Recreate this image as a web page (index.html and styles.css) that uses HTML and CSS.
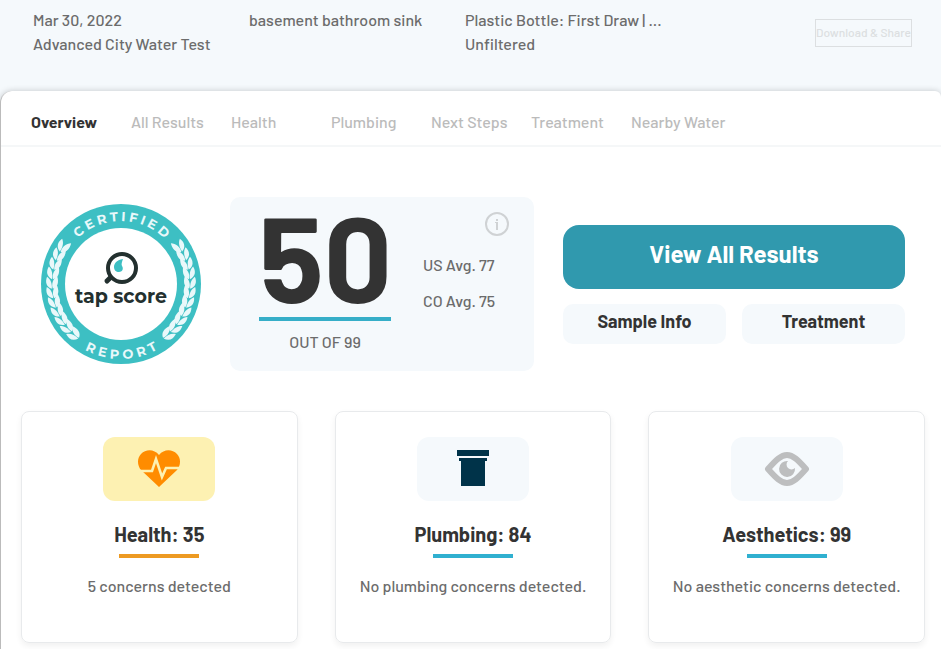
FILE: index.html
```html
<!DOCTYPE html>
<html lang="en">
<head>
  <meta charset="UTF-8">
  <meta name="viewport" content="width=device-width, initial-scale=1">
  <title>Tap Score Report</title>
  <link rel="stylesheet" href="styles.css">
</head>
<body>
  <header class="report-header">
    <div class="info">
      <div>Mar 30, 2022</div>
      <div>Advanced City Water Test</div>
    </div>
    <div class="info">
      <div>basement bathroom sink</div>
    </div>
    <div class="info">
      <div>Plastic Bottle: First Draw | ...</div>
      <div>Unfiltered</div>
    </div>
    <button type="button" class="download">Download &amp; Share</button>
  </header>

  <main class="panel">
    <nav class="tabs">
      <a href="#overview" class="active">Overview</a>
      <a href="#results">All Results</a>
      <a href="#health">Health</a>
      <a href="#plumbing">Plumbing</a>
      <a href="#next">Next Steps</a>
      <a href="#treatment">Treatment</a>
      <a href="#nearby">Nearby Water</a>
    </nav>

    <section class="summary">
      <svg class="seal" viewBox="0 0 160 160" role="img" aria-label="Tap Score certified report">
        <defs>
          <path id="arcTop" d="M17 80 A63 63 0 0 1 143 80"/>
          <path id="arcBottom" d="M5 80 A75 75 0 0 0 155 80"/>
          <g id="leaf">
            <path d="M11 86 C5 84 4 79 6 74 C10 77 11 81 11 86 Z"/>
            <path d="M12 86 C10 81 12 76 16 73 C18 79 17 84 12 86 Z"/>
          </g>
          <g id="branch">
            <use href="#leaf" transform="rotate(33 80 80)"/>
            <use href="#leaf" transform="rotate(25 80 80)"/>
            <use href="#leaf" transform="rotate(17 80 80)"/>
            <use href="#leaf" transform="rotate(9 80 80)"/>
            <use href="#leaf" transform="rotate(1 80 80)"/>
            <use href="#leaf" transform="rotate(-7 80 80)"/>
            <use href="#leaf" transform="rotate(-15 80 80)"/>
            <use href="#leaf" transform="rotate(-23 80 80)"/>
            <use href="#leaf" transform="rotate(-31 80 80)"/>
            <use href="#leaf" transform="rotate(-39 80 80)"/>
            <use href="#leaf" transform="rotate(-47 80 80)"/>
          </g>
        </defs>
        <circle cx="80" cy="80" r="80" fill="#3dbfc3"/>
        <circle cx="80" cy="80" r="56" fill="#fff"/>
        <g fill="#e9f8fa">
          <use href="#branch"/>
          <use href="#branch" transform="translate(160 0) scale(-1 1)"/>
        </g>
        <text class="ring-text"><textPath href="#arcTop" startOffset="51%">CERTIFIED</textPath></text>
        <text class="ring-text ring-bottom"><textPath href="#arcBottom" startOffset="51%">REPORT</textPath></text>
        <path d="M71 72 L66 77" stroke="#23302f" stroke-width="5" stroke-linecap="round"/>
        <circle cx="81" cy="64" r="14" fill="#fff" stroke="#23302f" stroke-width="4"/>
        <path d="M82 55 C75 56 73 60 73 63 C73 66 75 68 78 68 C81 68 83 65 81 62 C80 60 81 58 82 55 Z" fill="#3dbfc3"/>
        <text class="brand" x="80" y="99">tap score</text>
      </svg>

      <div class="score-box">
        <div class="score">
          <div class="score-value">50</div>
          <div class="score-max">OUT OF 99</div>
        </div>
        <div class="averages">
          <button type="button" class="info-btn" aria-label="About this score">
            <svg viewBox="0 0 24 24" width="24" height="24">
              <circle cx="12" cy="12" r="11" fill="none" stroke="#cfd2d4" stroke-width="2"/>
              <path d="M11 7 H13 V9 H11 Z M10 10 H13 V18 H11 V11 H10 Z" fill="#cfd2d4"/>
            </svg>
          </button>
          <div>US Avg. 77</div>
          <div>CO Avg. 75</div>
        </div>
      </div>

      <div class="actions">
        <button type="button" class="primary">View All Results</button>
        <button type="button">Sample Info</button>
        <button type="button">Treatment</button>
      </div>
    </section>

    <section class="cards">
      <article class="card">
        <div class="icon icon-warn">
          <svg viewBox="0 0 42 38" width="42" height="38">
            <path d="M21 37 L3 20 C-1 15 -1 8 3 4 C8 -1 16 -1 21 5 C26 -1 34 -1 39 4 C43 8 43 15 39 20 Z" fill="#ff8c00"/>
            <path d="M2 21 H14 L18 9 L24 27 L28 18 H42" fill="none" stroke="#fdf1b2" stroke-width="2.6"/>
          </svg>
        </div>
        <h2 class="warn">Health: 35</h2>
        <p>5 concerns detected</p>
      </article>
      <article class="card">
        <div class="icon">
          <svg viewBox="0 0 32 38" width="32" height="38" fill="#003349">
            <path d="M0 0 H32 V6 H0 Z M2 8 H30 V11 H28 V36 H4 V11 H2 Z"/>
          </svg>
        </div>
        <h2>Plumbing: 84</h2>
        <p>No plumbing concerns detected.</p>
      </article>
      <article class="card">
        <div class="icon">
          <svg viewBox="0 0 46 38" width="46" height="38">
            <path d="M4 19 C12 10 17 5 23 5 C29 5 34 10 42 19 C34 28 29 33 23 33 C17 33 12 28 4 19 Z" fill="none" stroke="#bdbebf" stroke-width="6" stroke-linejoin="round"/>
            <path d="M24 11 A8 8 0 1 0 31 18 A4 4 0 0 1 24 11 Z" fill="#bdbebf"/>
          </svg>
        </div>
        <h2>Aesthetics: 99</h2>
        <p>No aesthetic concerns detected.</p>
      </article>
    </section>
  </main>
</body>
</html>
```
FILE: styles.css
```css
* {
  box-sizing: border-box;
}

body {
  margin: 0;
  background: #f5f9fc;
  color: #6c6c6c;
  font-family: Barlow, Roboto, sans-serif;
  font-size: 16px;
  font-weight: 500;
  line-height: 24px;
}

button {
  border: 0;
  padding: 0;
  font-family: inherit;
  cursor: pointer;
}

.report-header {
  display: flex;
  align-items: flex-start;
  padding: 8px 29px 35px 33px;
}

.info {
  width: 216px;
  white-space: nowrap;
}

.download {
  height: 28px;
  margin: 11px 0 0 auto;
  padding-bottom: 2px;
  border: 1px solid #dcdfe1;
  background: none;
  color: #dcdfe1;
  font-size: 12px;
  font-weight: 500;
  white-space: nowrap;
}

.panel {
  border-left: 1px solid #bbb;
  border-radius: 12px 6px 0 0;
  background: #fff;
  box-shadow: 0 0 6px rgba(0, 0, 0, 0.2);
}

.tabs {
  display: flex;
  padding: 19px 30px 11px;
  border-bottom: 2px solid #f5f7f8;
}

.tabs a {
  width: 100px;
  color: #bbb;
  text-decoration: none;
  white-space: nowrap;
}

.tabs a.active {
  color: #333;
  font-weight: 700;
}

.summary {
  display: flex;
  align-items: center;
  padding: 50px 36px 40px 40px;
}

.seal {
  width: 160px;
  height: 160px;
  flex: none;
}

.ring-text {
  fill: #e9f8fa;
  font-family: Montserrat, Lato, sans-serif;
  font-size: 13px;
  font-weight: 700;
  letter-spacing: 3px;
  text-anchor: middle;
}

.ring-bottom {
  letter-spacing: 4px;
}

.brand {
  fill: #23302f;
  font-family: Montserrat, Lato, sans-serif;
  font-size: 19px;
  font-weight: 700;
  text-anchor: middle;
}

.score-box {
  display: flex;
  flex: none;
  width: 304px;
  height: 174px;
  margin: 0 29px;
  padding: 15px 25px 15px 29px;
  border-radius: 10px;
  background: #f5f9fc;
}

.score {
  width: 132px;
  text-align: center;
}

.score-value {
  height: 109px;
  border-bottom: 4px solid #36aec8;
  color: #333;
  font-size: 120px;
  font-weight: 700;
  line-height: 86px;
}

.score-max {
  margin-top: 9px;
}

.averages {
  display: flex;
  flex: 1;
  flex-direction: column;
  gap: 12px;
  margin-left: 32px;
}

.info-btn {
  align-self: flex-end;
  height: 24px;
  margin-bottom: 5px;
  background: none;
}

.info-btn svg {
  display: block;
}

.actions {
  display: grid;
  flex: 1;
  grid-template-columns: 1fr 1fr;
  gap: 15px 16px;
}

.actions button {
  height: 40px;
  padding-bottom: 6px;
  border-radius: 10px;
  background: #f5f9fc;
  color: #333;
  font-size: 18px;
  font-weight: 700;
}

.actions .primary {
  grid-column: span 2;
  height: 64px;
  border-radius: 16px;
  background: #3099ae;
  color: #fff;
  font-size: 24px;
}

.cards {
  display: grid;
  grid-template-columns: repeat(3, 1fr);
  gap: 37px;
  padding: 0 16px 6px 20px;
}

.card {
  display: flex;
  flex-direction: column;
  align-items: center;
  height: 232px;
  padding-top: 25px;
  border: 1px solid #e8eaec;
  border-radius: 8px;
  box-shadow: 0 3px 6px rgba(0, 0, 0, 0.06);
}

.icon {
  display: flex;
  align-items: center;
  justify-content: center;
  width: 112px;
  height: 64px;
  border-radius: 12px;
  background: #f5f9fc;
}

.icon-warn {
  background: #fdf1b2;
}

.card h2 {
  margin: 21px 0 0;
  color: #333;
  font-size: 20px;
  font-weight: 700;
  white-space: nowrap;
}

.card h2::after {
  content: "";
  display: block;
  width: 80px;
  height: 4px;
  margin: 8px auto 0;
  background: #30b0d0;
}

.card h2.warn::after {
  background: #ed9a22;
}

.card p {
  margin: 16px 0 0;
  white-space: nowrap;
}
```
